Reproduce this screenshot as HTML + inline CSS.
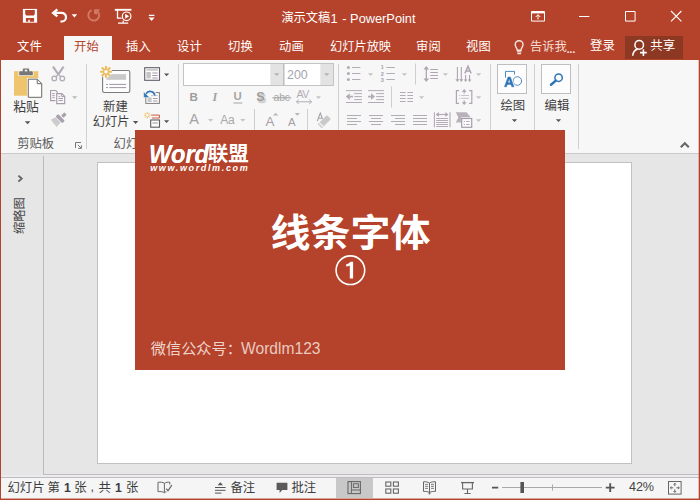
<!DOCTYPE html>
<html lang="zh-CN">
<head>
<meta charset="utf-8">
<title>演示文稿1 - PowerPoint</title>
<style>
html,body{margin:0;padding:0;}
body{width:700px;height:500px;overflow:hidden;position:relative;background:#e6e6e6;font-family:"Liberation Sans","Noto Sans CJK SC",sans-serif;font-size:12px;color:#444;}
.a{position:absolute;}
svg{position:absolute;display:block;overflow:visible;}
#titlebar{left:0;top:0;width:700px;height:60px;background:#b5422a;}
#ribbon{left:1px;top:60px;width:698px;height:93px;background:#f7f7f7;border-bottom:1px solid #cbcbcb;box-sizing:content-box;}
#tabhome{left:64px;top:36px;width:48px;height:24px;background:#f7f7f7;}
#share{left:625px;top:36.200px;width:57.800px;height:22.500px;background:#8c3823;}
.vsep{width:1px;background:#d0d0d0;}
#work{left:1px;top:154px;width:698px;height:322px;background:#e6e6e6;}
#slide{left:97px;top:162px;width:533px;height:300px;background:#fff;border:1px solid #c1c1c1;}
#overlay{left:135px;top:130px;width:430px;height:240px;background:#b5422a;}
#status{left:1px;top:475px;width:698px;height:22px;background:#f5f5f5;border-top:3px solid #ececec;}
#bl{left:0;top:0;width:1px;height:500px;background:#b5422a;}
#br{left:698px;top:0;width:2px;height:500px;background:linear-gradient(90deg,rgba(181,66,42,.3) 0,rgba(181,66,42,.3) 50%,#b5422a 50%);}
#bb{left:0;top:498px;width:700px;height:2px;background:linear-gradient(180deg,rgba(181,66,42,.45) 0,rgba(181,66,42,.45) 50%,#b5422a 50%);}
.t{white-space:nowrap;line-height:1;font-family:"Liberation Sans","Noto Sans CJK SC",sans-serif;}
</style>
</head>
<body>
<div class="a" id="work"></div>
<div class="a" id="titlebar"></div>
<div class="a" id="tabhome"></div>
<div class="a" id="share"></div>
<div class="a" id="ribbon"></div>


<!-- title bar + tab row icons -->
<svg class="a" style="left:0;top:0" width="700" height="60" viewBox="0 0 700 60" fill="none" stroke="#fff" stroke-width="1.3">
  <!-- save -->
  <rect x="22.900" y="8.900" width="14.200" height="13.800" fill="#fff" stroke="none"/>
  <path d="M25.200 10h9.600v4.600h-0.700v0.900h-8.200v-0.900h-0.700z" fill="#b5422a" stroke="none"/>
  <path d="M25.900 17.900h8.200v3.900h-4.300v-2h-1.500v2h-2.400z" fill="#b5422a" stroke="none"/>
  <!-- undo -->
  <path d="M51.300 12.900l5.300-4.400l1.500 1.800l-2 1.600v2l2 1.600l-1.500 1.800z" fill="#fff" stroke="none"/>
  <path d="M55.500 12.900h5.900a4.300 4.300 0 0 1 0.600 8.600l-1.600 0" stroke-width="2.200"/>
  <path d="M71.6 14.2h5.600l-2.800 3.200z" fill="#fff" stroke="none"/>
  <!-- redo (disabled) -->
  <g stroke="#cf7862" stroke-width="2">
    <path d="M91.600 10.200a5.400 5.400 0 1 0 6.700 2"/>
    <path d="M94 9.200h6l-3.400 5.600l-2.600-1.400z" fill="#cf7862" stroke="none"/>
  </g>
  <!-- start presentation -->
  <path d="M114.800 9.800h16.600" stroke-width="1.900"/>
  <path d="M117.5 10v8.100h4.200" stroke-width="1.300"/>
  <circle cx="126.600" cy="16.300" r="5.200" fill="#b5422a" stroke="none"/>
  <circle cx="126.600" cy="16.300" r="4.300" stroke-width="1.200"/>
  <path d="M125.200 13.800l3.900 2.500l-3.900 2.500z" fill="#fff" stroke="none"/>
  <path d="M123.200 20.500v2.600M118 23.200h10.200" stroke-width="1.200"/>
  <!-- customize qat -->
  <path d="M148.800 15.400h5.600" stroke-width="1.300"/>
  <path d="M148.600 17.600h6l-3 3.400z" fill="#fff" stroke="none"/>
  <!-- ribbon display options -->
  <path d="M531.500 11.500h13v9.600h-13z" stroke-width="1"/>
  <path d="M531.500 12.600h13" stroke-width="1.600"/>
  <path d="M538 19.500v-4.600M535.700 17l2.300-2.300l2.300 2.300" stroke-width="1"/>
  <!-- minimize / maximize / close -->
  <path d="M579 16.500h10.400" stroke-width="1"/>
  <path d="M625.500 11.500h9.600v9.600h-9.600z" stroke-width="1"/>
  <path d="M671 11l10.400 10.400M681.400 11l-10.400 10.400" stroke-width="1.100"/>
  <!-- light bulb -->
  <g stroke="#f8e4de" stroke-width="1.400">
    <path d="M517.200 50.200c0-2.200-2-3-2-5.600a3.900 3.900 0 0 1 7.800 0c0 2.600-2 3.400-2 5.600z"/>
    <path d="M517 51.800h4.400M517.400 53.700h3.600" stroke-width="1.300"/>
  </g>
  <!-- share person -->
  <circle cx="639.200" cy="44.900" r="4.300" stroke-width="1.500"/>
  <path d="M632.700 55.700c0.300-3.600 2.300-5.800 5-6.700" stroke-width="1.500"/>
  <path d="M643.400 49.200v6.800M640 52.600h6.800" stroke-width="1.600"/>
</svg>

<!-- title -->
<div class="a t" style="left:281.400px;top:12.200px;color:#fff;font-size:12.200px;">演示文稿</div>
<div class="a t" style="left:330.400px;top:12.600px;color:#fff;font-size:12.800px;">1<span style="letter-spacing:1.2px;"> </span>- PowerPoint</div>

<!-- tabs -->
<div class="a t" style="left:17.100px;top:40.700px;color:#fff;font-size:12.300px;">文件</div>
<div class="a t" style="left:74.100px;top:40.700px;color:#b5422a;font-size:12.300px;">开始</div>
<div class="a t" style="left:126.100px;top:40.700px;color:#fff;font-size:12.300px;">插入</div>
<div class="a t" style="left:177.100px;top:40.700px;color:#fff;font-size:12.300px;">设计</div>
<div class="a t" style="left:228.100px;top:40.700px;color:#fff;font-size:12.300px;">切换</div>
<div class="a t" style="left:279.100px;top:40.700px;color:#fff;font-size:12.300px;">动画</div>
<div class="a t" style="left:330.100px;top:40.700px;color:#fff;font-size:12.200px;">幻灯片放映</div>
<div class="a t" style="left:416.100px;top:40.700px;color:#fff;font-size:12.300px;">审阅</div>
<div class="a t" style="left:466.100px;top:40.700px;color:#fff;font-size:12.300px;">视图</div>
<div class="a t" style="left:529.900px;top:40.800px;color:#f6ddd6;font-size:12.300px;">告诉我</div>
<div class="a t" style="left:566.400px;top:42.600px;color:#f6ddd6;font-size:11.600px;letter-spacing:-.300px;font-weight:bold;">...</div>
<div class="a t" style="left:589.900px;top:40.200px;color:#fff;font-size:12.500px;">登录</div>
<div class="a t" style="left:650.200px;top:40.200px;color:#fff;font-size:12.500px;">共享</div>


<!-- ribbon icons -->
<svg class="a" style="left:0;top:60px" width="700" height="94" viewBox="0 60 700 94" fill="none">
  <!-- paste -->
  <rect x="14" y="71.200" width="24.300" height="24.500" fill="#eec46d"/>
  <path d="M19.200 75.200v-3.200q0-0.800 0.800-0.800h2.800v-1.600q0-1.200 1.200-1.200h4q1.200 0 1.200 1.200v1.600h2.800q0.800 0 0.800 0.800v3.200z" fill="#777" stroke="#f7f2e6" stroke-width="1.600" paint-order="stroke"/>
  <rect x="24.800" y="69.700" width="2.400" height="1.700" fill="#f7f7f7"/>
  <path d="M28.300 79.200h9l4.400 4.400v13.700h-13.400z" fill="#fff" stroke="#f7f4ec" stroke-width="2.600"/>
  <path d="M28.300 79.200h9l4.400 4.400v13.700h-13.400z" fill="#fff" stroke="#6b6b6b" stroke-width="1"/>
  <path d="M37.200 79.300v4.400h4.400" stroke="#6b6b6b" stroke-width="1"/>
  <path d="M24.800 121.300h5.600l-2.800 3z" fill="#555"/>
  <!-- cut -->
  <g stroke="#b3abb6" stroke-width="1.4">
    <path d="M53 66.600l5.300 7.800M63.600 66.600l-5.300 7.800" stroke-width="2.100"/>
    <path d="M58.300 74.400l2.600 2.600M58.300 74.400l-2.600 2.600" stroke-width="1.300"/>
    <circle cx="54.300" cy="78.500" r="2.300" stroke-width="1.300"/><circle cx="62.300" cy="78.500" r="2.300" stroke-width="1.300"/>
  </g>
  <!-- copy -->
  <g stroke="#a79bac" stroke-width="1.150">
    <path d="M55.400 100.600h-4.800v-10.100h5.200l1.400 1.400v1.200"/>
    <path d="M52.300 93.500h2.400M52.300 95.600h2.400M52.300 97.700h2.400" stroke-width="1"/>
    <path d="M56.700 93.600h5.200l2.800 2.800v7.200h-8z" fill="#fafafa"/>
    <path d="M61.700 93.800v2.800h2.800" stroke-width="1"/>
    <path d="M58.400 96.400h1.800M58.400 98.500h4.600M58.400 100.600h4.600" stroke-width="1"/>
  </g>
  <path d="M72.100 96.200h5.200l-2.600 2.800z" fill="#b9b9b9"/>
  <!-- format painter -->
  <path d="M50.800 119.800l4.600-2.600l5.300 5.400l-4.100 4.500z" fill="#cdcdcd"/>
  <rect x="-4.800" y="-1.800" width="9.600" height="3.600" rx="1.100" transform="translate(60.200 118.700) rotate(45)" fill="#aaa0ae"/>
  <rect x="-2.300" y="-1.700" width="4.600" height="3.400" rx="0.900" transform="translate(63.900 115.100) rotate(-45)" fill="#aaa0ae"/>
  <!-- dialog launcher -->
  <path d="M75.500 148v-5.500h5.500" stroke="#777" stroke-width="1"/>
  <path d="M77.800 144.800l3.300 3.300M81.400 145.200v3.200h-3.200" stroke="#777" stroke-width="1"/>

  <!-- new slide -->
  <rect x="102.600" y="70.500" width="27.200" height="22" rx="1.700" fill="#fdfdfd" stroke="#7c7c7c" stroke-width="1.100"/>
  <rect x="106.400" y="74.100" width="19.700" height="5.700" fill="#c9c9c9"/>
  <path d="M106 84.400h2M109.300 84.400h16.800M106 87.600h2M109.300 87.600h16.800" stroke="#94879a" stroke-width="0.900"/>
  <path d="M106 65.900v11.800M100.100 71.800h11.800M101.800 67.600l8.400 8.400M110.200 67.600l-8.400 8.400" stroke="#f9f9f9" stroke-width="3.800"/>
  <path d="M106 65.900v11.800M100.100 71.800h11.800M101.800 67.600l8.400 8.400M110.200 67.600l-8.400 8.400" stroke="#ecbd5e" stroke-width="2.100"/>
  <circle cx="106" cy="71.800" r="1.700" fill="#fff"/>
  <path d="M132.900 121.100h5.400l-2.700 2.900z" fill="#555"/>
  <!-- layout -->
  <rect x="144.700" y="67.700" width="14.800" height="12.600" fill="#fdfdfd" stroke="#5f5f6b" stroke-width="1.100"/>
  <path d="M146.400 69.900h11.400" stroke="#c2c2c2" stroke-width="1.500"/>
  <rect x="146.400" y="72" width="4.400" height="6.400" fill="#c4c4c4"/>
  <path d="M152.400 73h5.200M152.400 75.500h5.200M152.400 78h5.200" stroke="#a497aa" stroke-width="1"/>
  <path d="M164 73.400h5.200l-2.600 2.800z" fill="#555"/>
  <!-- reset -->
  <rect x="145.800" y="92.600" width="13.600" height="10.800" fill="#fdfdfd" stroke="#7d7d7d" stroke-width="1"/>
  <path d="M151 95.600h6.800" stroke="#c8c8c8" stroke-width="1.300"/>
  <rect x="147.600" y="97.400" width="4" height="4.600" fill="#c6c6c6"/>
  <path d="M153 98.500h4.600M153 101h4.600" stroke="#a497aa" stroke-width="1"/>
  <path d="M154.800 95.400a4.700 4.700 0 0 0-8.600-1.600" stroke="#f7f7f7" stroke-width="3.800"/>
  <path d="M154.800 95.600a4.700 4.700 0 0 0-8.800-1.800" stroke="#2f75b8" stroke-width="1.600"/>
  <path d="M143.700 91.800v5.800h5.800z" fill="#2f75b8" stroke="#f7f7f7" stroke-width=".5"/>
  <!-- section -->
  <path d="M147.300 111.800v6.800M143.900 115.200h6.800M144.900 112.800l4.800 4.800M149.700 112.800l-4.800 4.800" stroke="#efc070" stroke-width="1"/>
  <circle cx="147.300" cy="115.200" r="1.100" fill="#fff"/>
  <path d="M151.200 115.100h8.200v2.900h-7.400" stroke="#c8482c" stroke-width="0.900"/>
  <rect x="150.700" y="120" width="8.800" height="7.200" fill="#fdfdfd" stroke="#5f5f5f" stroke-width="1.100"/>
  <path d="M152.400 123h5.400" stroke="#c4c4c4" stroke-width="1.800"/>
  <path d="M164 120.200h5.200l-2.600 2.800z" fill="#555"/>

  <!-- font boxes -->
  <rect x="183.500" y="63.500" width="150" height="22" fill="#fff" stroke="#c3c3c3" stroke-width="1"/>
  <rect x="270.300" y="64" width="12.700" height="21" fill="#e3e3e3"/>
  <rect x="320.300" y="64" width="12.700" height="21" fill="#e3e3e3"/>
  <path d="M283.800 63.500v22" stroke="#b9b9b9" stroke-width="1.400"/>
  <path d="M274 73.200h5.400l-2.700 2.900z" fill="#b5b5b5"/>
  <path d="M324 73.200h5.400l-2.700 2.900z" fill="#b5b5b5"/>
  <!-- text effects strike line, AV arrows -->
  <path d="M272.400 97.800h18.800" stroke="#9a9a9a" stroke-width="1"/>
  <path d="M296.600 101.800h14.800M298.800 99.600l-2.400 2.200l2.400 2.200M309.200 99.600l2.400 2.200l-2.400 2.200" stroke="#b3abb6" stroke-width="1"/>
  <path d="M316 96.200h5l-2.500 2.700z" fill="#c4c4c4"/>
  <path d="M233.400 103h8.800" stroke="#a3a3a3" stroke-width="1"/>
  <path d="M208 118.900h5.200l-2.600 2.800z" fill="#c4c4c4"/>
  <path d="M240.200 118.900h5.200l-2.600 2.800z" fill="#c4c4c4"/>
  <path d="M273 115.600h5.200l-2.600-2.800z" fill="#b9b3bb"/>
  <path d="M294.700 113h5.200l-2.600 2.800z" fill="#b9b3bb"/>
  <!-- clear formatting eraser -->
  <path d="M317.300 121l3-8l3 8M318.400 118.200h3.800" stroke="#a9a0ad" stroke-width="1.100"/>
  <path d="M326 115.600q0.900-0.900 1.800 0l2.600 2.600q0.900 0.900 0 1.800l-6.600 6.600l-4.400-4.400z" fill="#c9c9c9" stroke="#f7f7f7" stroke-width=".6"/>
  <path d="M318.800 122.800l4.400 4.400l-0.500 0.500q-0.900 0.900-1.800 0l-2.600-2.600q-0.900-0.900 0-1.800z" fill="#d4d4d4"/>

  <!-- paragraph: bullets -->
  <g stroke="#b3abb6" stroke-width="1">
    <path d="M352 67.500h8.400M352 73.500h8.400M352 79.500h8.400"/>
    <path d="M386.400 67.500h8.400M386.400 73.500h8.400M386.400 79.500h8.400"/>
  </g>
  <g fill="#b3abb6">
    <circle cx="348.400" cy="67.400" r="1.500"/><circle cx="348.400" cy="73.500" r="1.500"/><circle cx="348.400" cy="79.500" r="1.500"/>
  </g>
  <path d="M368 73.200h5.200l-2.600 2.800z" fill="#c4c4c4"/>
  <path d="M401.800 73.200h5.200l-2.600 2.800z" fill="#c4c4c4"/>
  <g fill="#a9a1ac" font-family="Liberation Sans, sans-serif" font-size="5.600" font-weight="bold"><text x="380.800" y="69.300">1</text><text x="380.800" y="75.600">2</text><text x="380.800" y="81.600">3</text></g>
  <!-- line spacing -->
  <g stroke="#aea5b1" stroke-width="1.200">
    <path d="M426.300 68v12.400" stroke-width="1.300"/>
    <path d="M426.300 66l2.800 3.600h-5.600zM426.300 82l2.800-3.600h-5.600z" fill="#aea5b1" stroke="none"/>
    <path d="M430.300 69.500h7.600M430.300 72.500h7.600M430.300 75.500h7.600M430.300 78.500h7.600" stroke-width="1.100"/>
  </g>
  <path d="M442.800 73.200h5.200l-2.600 2.800z" fill="#c4c4c4"/>
  <!-- text direction -->
  <g stroke="#aea5b1" stroke-width="1.100">
    <path d="M457.400 67v13M461.300 67v13"/>
    <path d="M457.400 82l2-2.800h-4zM461.300 82l2-2.800h-4zM465.600 82l1.800-2.600h-3.600zM469.600 82l1.800-2.600h-3.600z" fill="#aea5b1" stroke="none"/>
    <path d="M465.600 75v5M469.600 75v5"/>
    <path d="M464.900 73.400l3.100-7l3.100 7M466.100 71.100h3.800" stroke-width="1.500"/>
  </g>
  <path d="M476 73.200h5.200l-2.600 2.800z" fill="#c4c4c4"/>
  <!-- indent -->
  <g stroke="#b3abb6" stroke-width="1">
    <path d="M346 90.600h16M346 102.500h16M354.200 93.600h7.800M354.200 96.600h7.800M354.200 99.600h7.800"/>
    <path d="M349 96.600h4" stroke-width="1.700"/><path d="M345.800 96.600l4-3.300v6.600z" fill="#b3abb6" stroke="none"/>
    <path d="M368 90.600h16M368 102.500h16M376.200 93.600h7.800M376.200 96.600h7.800M376.200 99.600h7.800"/>
    <path d="M368 96.600h4" stroke-width="1.700"/><path d="M375 96.600l-4-3.300v6.600z" fill="#b3abb6" stroke="none"/>
    <!-- columns -->
    <path d="M400 92.500h5.600M407.400 92.500h5.600M400 95.500h5.600M407.400 95.500h5.600M400 98.500h5.600M407.400 98.500h5.600M400 101.500h5.600M407.400 101.500h5.600"/>
  </g>
  <path d="M419 96.200h5.200l-2.600 2.800z" fill="#c4c4c4"/>
  <!-- align text -->
  <g stroke="#aea5b1" stroke-width="1.100">
    <path d="M459 90.600h-2.600v12.800h2.600M469.200 90.600h2.600v12.800h-2.600" stroke-width="1.200"/>
    <path d="M464.200 91v2.600M464.200 100.400v2.600" stroke-width="1.200"/>
    <path d="M464.200 89l2.400 2.800h-4.800zM464.200 105l2.400-2.800h-4.800z" fill="#aea5b1" stroke="none"/>
    <path d="M459.200 95.500h1M461.200 95.500h7.800M459.200 98.400h1M461.200 98.400h7.800" stroke="#c4bcc7" stroke-width="0.900"/>
  </g>
  <path d="M476 96.200h5.200l-2.600 2.800z" fill="#c4c4c4"/>
  <!-- alignment row -->
  <g stroke="#b3abb6" stroke-width="1">
    <path d="M347 115.500h14M347 118.500h10M347 121.500h14M347 124.500h10"/>
    <path d="M369 115.500h14M371 118.500h10M369 121.500h14M371 124.500h10"/>
    <path d="M391 115.500h14M395 118.500h10M391 121.500h14M395 124.500h10"/>
    <path d="M413 115.500h14M413 118.500h14M413 121.500h14M413 124.500h14"/>
    <!-- distributed -->
    <path d="M434.400 112.200v15M450 112.200v15" stroke-width="1.100"/>
    <path d="M437.400 114.500h9.400" stroke-width="1.200"/><path d="M435.800 114.500l3-2.400v4.800zM448.400 114.500l-3-2.400v4.800z" fill="#aea5b1" stroke="none"/>
    <path d="M436.200 118.500h11.800M436.200 120.500h11.800M436.200 122.500h11.800M436.200 124.500h11.800M436.200 126.500h11.800"/>
  </g>
  <!-- smartart -->
  <path d="M455.800 112.300h10.800l4 5h-9.200v5.200h-5.600l2.600-5.100z" fill="#b9b1bc"/>
  <rect x="461.700" y="118.500" width="10" height="8.800" fill="#fbfbfb" stroke="#a69dab" stroke-width="1.200"/>
  <path d="M463.800 121.500h1.200M466.200 121.500h3.400M463.800 124.500h1.200M466.200 124.500h3.400" stroke="#b3abb6" stroke-width="1"/>
  <path d="M476 119.200h5.200l-2.600 2.800z" fill="#c4c4c4"/>

  <!-- drawing / editing buttons -->
  <rect x="497.500" y="64.500" width="29" height="29" fill="#fdfdfd" stroke="#bebebe"/>
  <rect x="541.500" y="64.500" width="29" height="29" fill="#fdfdfd" stroke="#bebebe"/>
  <path d="M505.500 77.600v-6.200h9v3.200" stroke="#3a7cbc" stroke-width="0.900"/>
  <circle cx="517.300" cy="81" r="4.300" stroke="#3a7cbc" stroke-width="0.900"/>
  <path d="M504.400 86.800l3.600-9.800h2.400l3.600 9.800h-2.200l-0.800-2.400h-3.700l-0.800 2.400zM507.900 82.700h2.500l-1.250-3.800z" fill="#fdfdfd" stroke="#fdfdfd" stroke-width="2.200"/>
  <path d="M504.400 86.800l3.600-9.800h2.400l3.600 9.800h-2.200l-0.800-2.400h-3.700l-0.800 2.400zM507.900 82.700h2.500l-1.250-3.800z" fill="#2f75b8" stroke="#2f75b8" stroke-width="0.450"/>
  <circle cx="558.600" cy="77.700" r="3.700" stroke="#2f75b8" stroke-width="1.500"/>
  <path d="M555.800 80.600l-4.800 4.200" stroke="#2f75b8" stroke-width="2.500" stroke-linecap="round"/>
  <path d="M511.800 119.200h5.400l-2.700 2.900z" fill="#555"/>
  <path d="M555.800 119.200h5.400l-2.700 2.900z" fill="#555"/>
  <!-- collapse ribbon -->
  <path d="M680.800 147.200l4-4l4 4" stroke="#666" stroke-width="2.100"/>
  <!-- small separators -->
  <path d="M254.500 109v21M307.500 109v21M391.500 86.500v21M415.500 63.500v21" stroke="#cecece" stroke-width="1"/>
</svg>


<!-- font group glyph buttons -->
<div class="a t" style="left:287px;top:68.500px;font-size:12.400px;color:#a3a5ad;">200</div>
<div class="a t" style="left:189.500px;top:91.400px;font-size:11.600px;font-weight:bold;color:#9d9d9d;">B</div>
<div class="a t" style="left:212.600px;top:91.200px;font-size:12.200px;font-style:italic;font-weight:bold;font-family:'Liberation Serif',serif;color:#a2a2a2;">I</div>
<div class="a t" style="left:233.400px;top:91.400px;font-size:11.400px;font-weight:bold;color:#a6a6a6;">U</div>
<div class="a t" style="left:257.800px;top:92.600px;font-size:12.600px;font-weight:bold;color:#cfcfcf;text-shadow:0 0 1.500px #c8c8c8;">S</div>
<div class="a t" style="left:256.200px;top:91.200px;font-size:12.600px;font-weight:bold;color:#9d9d9d;">S</div>
<div class="a t" style="left:273.600px;top:92.600px;font-size:10.400px;color:#a8a8a8;letter-spacing:-0.2px;">abc</div>
<div class="a t" style="left:296.600px;top:89.400px;font-size:10.600px;color:#b3abb6;letter-spacing:-0.6px;">AV</div>
<div class="a t" style="left:189.200px;top:111.800px;font-size:14.600px;color:#a3a3a3;">A</div>
<div class="a t" style="left:220.200px;top:113.600px;font-size:12px;color:#a8a8a8;letter-spacing:-0.3px;">Aa</div>
<div class="a t" style="left:265.400px;top:115px;font-size:13.400px;color:#a59fa8;">A</div>
<div class="a t" style="left:288px;top:116.800px;font-size:11.400px;color:#a59fa8;">A</div>

<!-- ribbon text -->
<div class="a t" style="left:13.300px;top:100.600px;color:#3f3f3f;font-size:12.800px;">粘贴</div>
<div class="a t" style="left:17.200px;top:137.700px;color:#5c5c5c;font-size:12.300px;">剪贴板</div>
<div class="a t" style="left:103.100px;top:100.900px;color:#3f3f3f;font-size:12.400px;">新建</div>
<div class="a t" style="left:92.700px;top:116px;color:#3f3f3f;font-size:12.300px;">幻灯片</div>
<div class="a t" style="left:113.600px;top:137.700px;color:#5c5c5c;font-size:12.300px;">幻灯片</div>
<div class="a t" style="left:500.400px;top:99.700px;color:#3f3f3f;font-size:12.400px;">绘图</div>
<div class="a t" style="left:544.600px;top:99.700px;color:#3f3f3f;font-size:12.400px;">编辑</div>

<div class="a vsep" style="left:86px;top:64px;height:85px;"></div>
<div class="a vsep" style="left:178px;top:64px;height:85px;"></div>
<div class="a vsep" style="left:338px;top:64px;height:85px;"></div>
<div class="a vsep" style="left:490px;top:64px;height:85px;"></div>
<div class="a vsep" style="left:534px;top:64px;height:85px;"></div>
<div class="a vsep" style="left:578px;top:64px;height:85px;"></div>

<!-- workspace -->
<div class="a" style="left:43px;top:156px;width:1px;height:319px;background:#bdb8c0;"></div>
<div class="a" style="left:44px;top:474px;width:655px;height:1px;background:#c0bac2;"></div>
<div class="a" id="slide"></div>
<div class="a" id="overlay"></div>

<!-- overlay content -->
<div class="a t" style="left:148.600px;top:141.800px;font-size:25.200px;font-weight:bold;font-style:italic;color:#fff;transform:scaleX(.94);transform-origin:0 0;text-shadow:0 0 .600px #fff;">Word</div>
<div class="a t" style="left:207.700px;top:143.500px;color:#fff;font-size:20.500px;font-weight:bold;">联盟</div>
<div class="a t" style="left:150.200px;top:164px;font-size:9px;font-weight:bold;font-style:italic;color:#fff;letter-spacing:1.640px;">www.wordlm.com</div>
<svg class="a" style="left:330px;top:250px" width="40" height="40" viewBox="330 250 40 40" fill="none">
  <circle cx="350.400" cy="270.200" r="14.300" stroke="#fff" stroke-width="1.600"/>
  <path d="M346.200 266.600v-2.300q2.600-0.600 4.300-2.600h2.600v16.700h-3.300v-12.800q-1.600 0.800-3.600 1z" fill="#fff"/>
</svg>

<div class="a t" style="left:270.600px;top:212.600px;color:#fff;font-size:40px;font-weight:bold;"><span style="display:inline-block;transform:scaleY(.95);transform-origin:50% 50%;">线条字体</span></div>
<div class="a t" style="left:150.800px;top:340.900px;color:#eed6cf;font-size:15.200px;">微信公众号：</div>
<div class="a t" style="left:241.200px;top:341.200px;color:#e9cac1;font-size:16px;transform:scaleX(.976);transform-origin:0 0;">Wordlm123</div>


<!-- thumbnail pane collapsed -->
<svg class="a" style="left:0;top:154px" width="44" height="100" viewBox="0 154 44 100" fill="none">
  <path d="M18.400 175.600l3.300 3l-3.300 3" stroke="#666" stroke-width="1.900"/>
</svg>
<div class="a t" style="left:14.300px;top:234.200px;transform:rotate(-90deg);transform-origin:0 0;width:37.800px;height:12.800px;color:#484848;font-size:12.300px;">缩略图</div>

<!-- status -->
<div class="a" id="status"></div>
<div class="a" style="left:1px;top:477px;width:698px;height:1px;background:#c0bac2;"></div>
<div class="a t" style="left:7.400px;top:481.800px;color:#3c3c3c;font-size:12.400px;">幻灯片</div>
<div class="a t" style="left:47.600px;top:481.800px;color:#3c3c3c;font-size:12.400px;">第</div>
<div class="a t" style="left:64px;top:481.800px;font-size:12.200px;font-weight:bold;color:#3c3c3c;">1</div>
<div class="a t" style="left:74.200px;top:481.800px;color:#3c3c3c;font-size:12.400px;">张</div>
<div class="a t" style="left:90.400px;top:481.400px;font-size:12.400px;color:#3c3c3c;">,</div>
<div class="a t" style="left:98.600px;top:481.800px;color:#3c3c3c;font-size:12.400px;">共</div>
<div class="a t" style="left:115px;top:481.800px;font-size:12.200px;font-weight:bold;color:#3c3c3c;">1</div>
<div class="a t" style="left:126px;top:481.800px;color:#3c3c3c;font-size:12.400px;">张</div>
<div class="a t" style="left:230.400px;top:481.800px;color:#3c3c3c;font-size:12.400px;">备注</div>
<div class="a t" style="left:291.400px;top:481.800px;color:#3c3c3c;font-size:12.400px;">批注</div>
<div class="a t" style="left:629px;top:481.200px;font-size:12.600px;color:#444;letter-spacing:-0.1px;">42%</div>
<div class="a" style="left:336px;top:478px;width:36.500px;height:20px;background:#c8c8c8;"></div>
<svg class="a" style="left:0;top:476px" width="700" height="24" viewBox="0 476 700 24" fill="none" stroke="#666" stroke-width="1">
  <!-- spell check -->
  <path d="M164.400 483.300v9.400M164.400 483.300c-1.600-1.200-4-1.300-6.400-1v9.400c2.400-.3 4.800-.2 6.400 1c.6-.5 1.200-.8 2-.9" />
  <path d="M164.400 483.300c1.400-1 3.400-1.300 5.400-1.100v2.400"/>
  <path d="M166.200 488.600l1.800 2.200l3.800-5.600" stroke-width="1.200"/>
  <!-- notes -->
  <path d="M215 487.500h10.600M215 490.300h10.600M215 493.100h6.400" stroke="#555"/>
  <path d="M217.600 485.200l2.700-3l2.700 3z" fill="#555" stroke="none"/>
  <!-- comments -->
  <path d="M276.600 482.800h10.800v7.200h-5.200l-2.600 3v-3h-3z" fill="#5a5a5a" stroke="none"/>
  <!-- normal view -->
  <rect x="348" y="481.600" width="12.400" height="12" stroke="#666" stroke-width="1.100"/>
  <path d="M351.400 481.600v12M351.400 490h9" stroke-width="1"/>
  <rect x="353.400" y="483.800" width="5" height="3.600" stroke-width="1"/>
  <!-- sorter -->
  <rect x="385.800" y="482" width="5" height="4.200" stroke-width="1.100"/><rect x="393.400" y="482" width="5" height="4.200" stroke-width="1.100"/>
  <rect x="385.800" y="489" width="5" height="4.200" stroke-width="1.100"/><rect x="393.400" y="489" width="5" height="4.200" stroke-width="1.100"/>
  <!-- reading view -->
  <path d="M429.500 483v10.600M429.500 483c-1.500-1-3.800-1.400-6-1.200v9.600c2.200-.2 4.500.2 6 1.200c1.500-1 3.800-1.400 6-1.200v-9.600c-2.200-.2-4.500.2-6 1.200"/>
  <path d="M425 484.400h3M425 486.400h3M425 488.400h3M431 484.400h3M431 486.400h3M431 488.400h3" stroke-width=".8"/>
  <path d="M429.500 493v1.400" stroke-width="1.600"/>
  <!-- slideshow -->
  <path d="M461 482.600h13" stroke-width="1.300"/>
  <path d="M462.600 483v6h9.800v-6M467.500 489v4M464.400 493.500h6.200" stroke-width="1.100"/>
  <!-- zoom -->
  <path d="M492 487.600h6.200M605.800 487.600h8.800M610.200 483.200v8.800" stroke="#555" stroke-width="1.900"/>
  <path d="M502 487.500h100" stroke="#a9a9a9" stroke-width="1"/>
  <path d="M552.500 484.500v6" stroke="#a9a9a9" stroke-width="1"/>
  <rect x="520.400" y="482" width="3.600" height="11" fill="#555" stroke="none"/>
  <!-- fit -->
  <rect x="668.500" y="481.500" width="12.600" height="12.600" stroke-width="1"/>
  <path d="M674.800 483.400v2.800M674.800 489.400v2.800M670.400 487.800h2.800M676.400 487.800h2.800" stroke-width="1"/>
  <path d="M673.600 484.600l1.200-1.400l1.200 1.400M673.600 491l1.200 1.400l1.200-1.400M671.600 486.600l-1.400 1.200l1.400 1.200M678 486.600l1.400 1.200l-1.400 1.200" stroke-width=".9"/>
</svg>

<div class="a" id="bl"></div><div class="a" id="br"></div><div class="a" id="bb"></div>
</body>
</html>
